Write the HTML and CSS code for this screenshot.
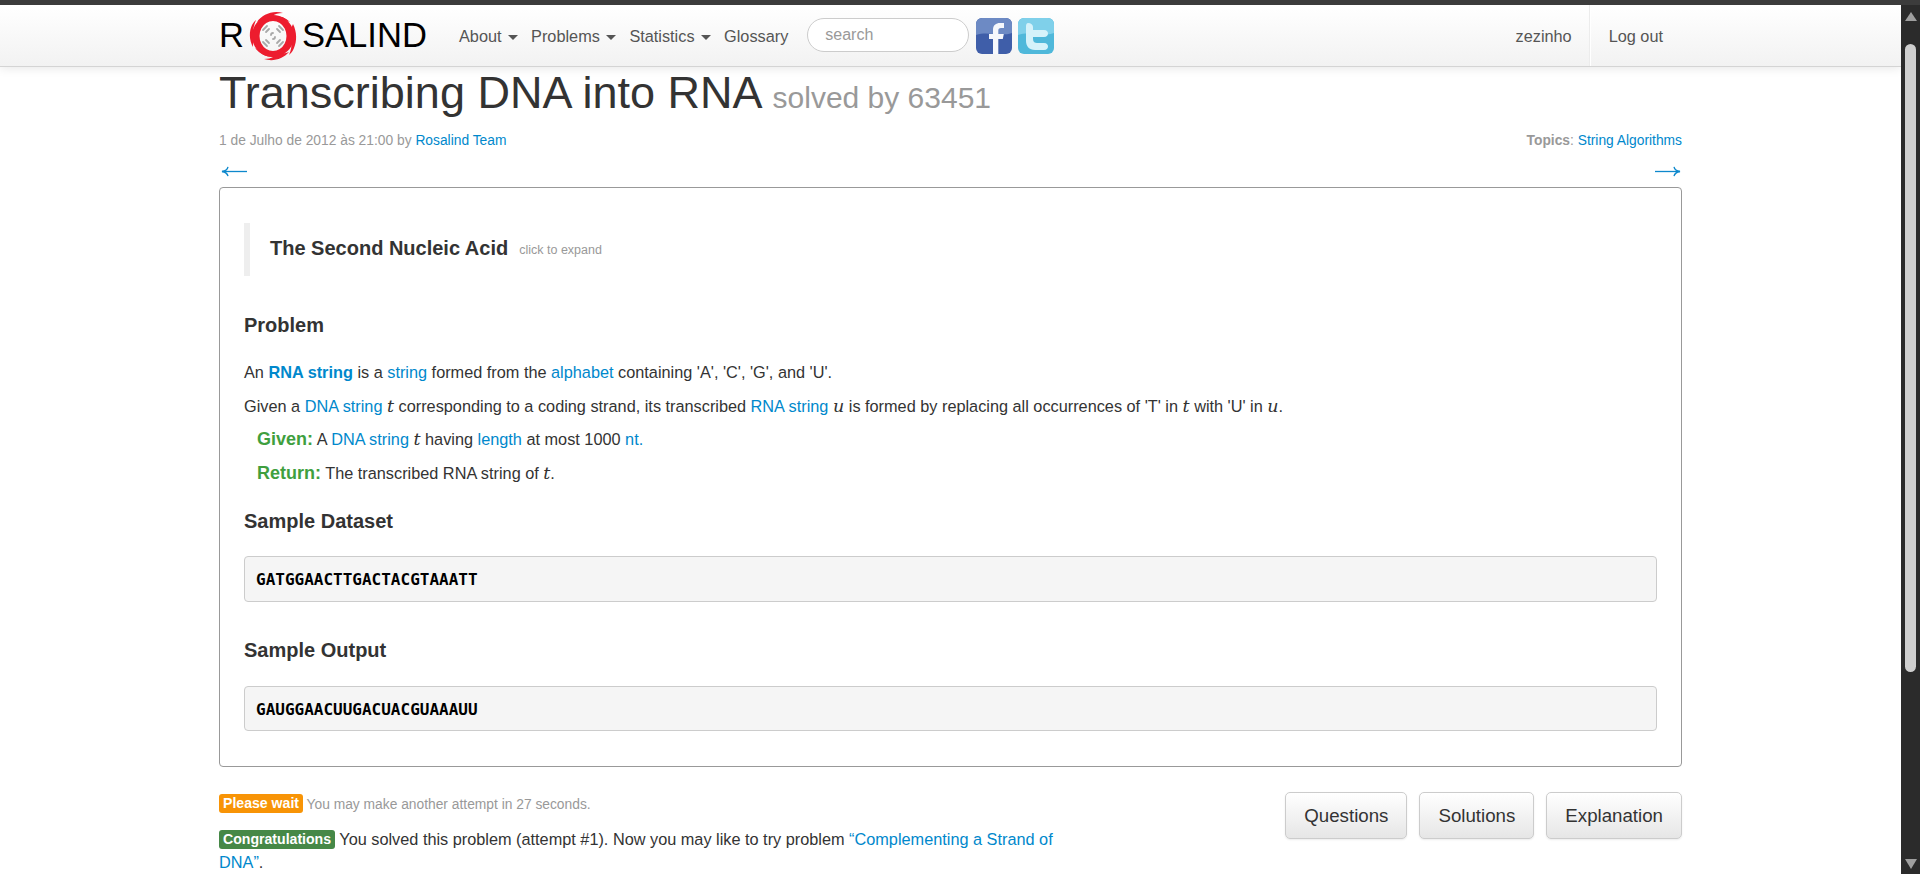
FILE: index.html
```html
<!DOCTYPE html>
<html lang="en">
<head>
<meta charset="utf-8">
<title>Transcribing DNA into RNA</title>
<link rel="stylesheet" href="styles.css">
</head>
<body>
<div class="window-top"></div>
<div class="viewport">
  <div class="page">
    <header class="navbar">
      <div class="container nav-inner">
        <a class="logo"><span>R</span>
          <svg class="logo-mark" viewBox="0 0 50 50" width="50" height="50" aria-hidden="true">
            <path fill="#ed1c2e" fill-rule="evenodd" d="M25 4a21 21 0 1 0 .01 0z M25 10a13.500 15 0 1 1-.01 0z"/>
            <path fill="#ed1c2e" d="M9 11C14 4 24-1 35 2c-5 0-8 1-11 3 6-1 13 1 18 6-7-3-20-6-33 0z"/>
            <path fill="#ed1c2e" d="M45 13c4 8 4 17 1 24-1 3-3 5-5 7 2-5 3-9 2-13-1-7-1-12 2-18z"/>
            <path fill="#ed1c2e" d="M41 41c-6 7-16 10-25 7 4 0 7-1 9-2-7 0-13-3-18-9 7 4 21 9 34 4z"/>
            <path fill="#ed1c2e" d="M5 36C1 29 1 20 4 14c1-2 2-3 4-5-2 5-3 9-3 13 0 5 0 9 0 14z"/>
            <g fill="none" stroke="#a8a8a8" stroke-width="1.800" stroke-linecap="round">
              <path d="M15 19l4-4"/><path d="M18 21l3-3"/>
              <path d="M31 15l4 4"/><path d="M29 18l3 3"/>
              <path d="M35 31l-4 4"/><path d="M32 29l-3 3"/>
              <path d="M19 35l-4-4"/><path d="M21 32l-3-3"/>
              <path d="M23 24c0-1 1-2 2-2"/><path d="M27 26c0 1-1 2-2 2"/>
            </g>
          </svg>
          <span>SALIND</span></a>
        <nav class="nav-main">
          <a class="nav-item">About <i class="caret"></i></a>
          <a class="nav-item">Problems <i class="caret"></i></a>
          <a class="nav-item">Statistics <i class="caret"></i></a>
          <a class="nav-item">Glossary</a>
        </nav>
        <input class="search" type="text" placeholder="search">
        <div class="social">
          <svg width="36" height="36" viewBox="0 0 36 36" aria-hidden="true">
            <rect width="36" height="36" rx="6" fill="#3f5ea9"/>
            <path d="M0 6a6 6 0 0 1 6-6h24a6 6 0 0 1 6 6v9c-12 4-24-2-36 2z" fill="#6d8ac4"/>
            <path d="M17 36V21h-4v-5h4v-4c0-5 3-7 7-7h4v5h-3c-2 0-2.700 1-2.700 2.500V16h5.500l-1 5h-4.500v15z" fill="#f6f8fc"/>
          </svg>
          <svg width="36" height="36" viewBox="0 0 36 36" aria-hidden="true">
            <rect width="36" height="36" rx="6" fill="#4fb8da"/>
            <path d="M0 6a6 6 0 0 1 6-6h24a6 6 0 0 1 6 6v9c-12 4-24-2-36 2z" fill="#7fd0ea"/>
            <path d="M10 5c3 0 5 2 5 4v3h11c3 0 4 2 4 3.500S29 19 26 19H15v2c0 3 2 4 4 4h7c3 0 4 2 4 3.500S29 32 26 32h-9C11 32 8 28 8 23V8c0-2 1-3 2-3z" fill="#d5f2fa"/>
          </svg>
        </div>
        <div class="nav-user">
          <a class="nav-item user">zezinho</a>
          <a class="nav-item logout">Log out</a>
        </div>
      </div>
    </header>

    <main class="container content">
      <h1 class="title">Transcribing DNA into RNA <small>solved by 63451</small></h1>
      <div class="meta">
        <span>1 de Julho de 2012 às 21:00 by <a>Rosalind Team</a></span>
        <span><b>Topics</b>: <a>String Algorithms</a></span>
      </div>
      <div class="pager">
        <a class="prev" aria-label="Previous">
          <svg width="26" height="11" viewBox="0 0 26 11" fill="none" stroke="#0d88cc" stroke-width="1.300" aria-hidden="true">
            <path d="M1 5.500H26"/>
            <path d="M7 .8C6.500 3.300 4 5 1 5.500 4 6 6.500 7.700 7 10.200"/>
          </svg>
        </a>
        <a class="next" aria-label="Next">
          <svg width="26" height="11" viewBox="0 0 26 11" fill="none" stroke="#0d88cc" stroke-width="1.300" aria-hidden="true">
            <path d="M0 5.500H25"/>
            <path d="M19 .8C19.500 3.300 22 5 25 5.500 22 6 19.500 7.700 19 10.200"/>
          </svg>
        </a>
      </div>

      <article class="problem">
        <blockquote class="story"><span class="story-title">The Second Nucleic Acid</span><span class="expand">click to expand</span></blockquote>
        <h2 class="h-problem">Problem</h2>
        <p>An <a><b>RNA string</b></a> is a <a>string</a> formed from the <a>alphabet</a> containing 'A', 'C', 'G', and 'U'.</p>
        <p class="tight">Given a <a>DNA string</a> <i class="math">t</i> corresponding to a coding strand, its transcribed <a>RNA string</a> <i class="math">u</i> is formed by replacing all occurrences of 'T' in <i class="math">t</i> with 'U' in <i class="math">u</i>.</p>
        <p class="indent"><b class="green">Given:</b> A <a>DNA string</a> <i class="math">t</i> having <a>length</a> at most 1000 <a>nt.</a></p>
        <p class="indent"><b class="green">Return:</b> The transcribed RNA string of <i class="math">t</i>.</p>
        <h2 class="h-sample">Sample Dataset</h2>
        <pre class="code">GATGGAACTTGACTACGTAAATT</pre>
        <h2 class="h-output">Sample Output</h2>
        <pre class="code code-output">GAUGGAACUUGACUACGUAAAUU</pre>
      </article>

      <section class="bottom">
        <div class="messages">
          <p class="wait"><span class="label orange">Please wait</span> You may make another attempt in 27 seconds.</p>
          <p class="congrats"><span class="label dark-green">Congratulations</span> You solved this problem (attempt #1). Now you may like to try problem <a>“Complementing a Strand of</a> <a>DNA”</a>.</p>
        </div>
        <div class="buttons">
          <a class="btn">Questions</a>
          <a class="btn">Solutions</a>
          <a class="btn">Explanation</a>
        </div>
      </section>
    </main>
  </div>
  <aside class="scrollbar">
    <i class="arrow up"></i>
    <div class="track"><div class="thumb"></div></div>
    <i class="arrow down"></i>
  </aside>
</div>
</body>
</html>
```
FILE: styles.css
```css
* { box-sizing: border-box; }
html, body { margin: 0; height: 100%; overflow: hidden; }
body {
  display: flex;
  flex-direction: column;
  font-family: "Liberation Sans", Arial, sans-serif;
  font-size: 16.300px;
  line-height: 23px;
  color: #333;
  background: #fff;
}
a { color: #0088cc; text-decoration: none; }
p { margin: 0; }

.window-top { height: 5px; background: #3c3c3c; flex: none; }
.viewport { flex: 1; display: flex; min-height: 0; }
.page { flex: 1; min-width: 0; overflow: hidden; }
.container { width: 1463px; margin: 0 auto; }

.navbar {
  height: 62px;
  background: linear-gradient(#ffffff, #f2f2f2);
  border-bottom: 1px solid #d4d4d4;
  box-shadow: 0 1px 10px rgba(0, 0, 0, .1);
}
.nav-inner { display: flex; align-items: flex-start; height: 61px; }
.logo {
  display: flex;
  align-items: center;
  width: 240px;
  height: 61px;
  flex: none;
  color: #000;
  font-size: 34.600px;
}
.logo-mark { margin: 0 4px 0 4px; flex: none; }
.nav-main { display: flex; flex: none; }
.nav-item { color: #555; line-height: 63px; white-space: nowrap; }
.nav-main .nav-item { margin-right: 13px; }
.nav-main .nav-item:last-child { margin-right: 0; }
.caret {
  display: inline-block;
  width: 0; height: 0;
  margin-left: 2px;
  vertical-align: middle;
  border: 5px solid transparent;
  border-top-color: #555;
  border-bottom: 0;
}
.search {
  width: 162px;
  height: 34px;
  margin: 13px 0 0 19px;
  padding: 0 17px;
  border: 1px solid #ccc;
  border-radius: 17px;
  background: #fff;
  font: 16px "Liberation Sans", Arial, sans-serif;
  color: #555;
  flex: none;
}
.search::placeholder { color: #999; opacity: 1; }
.social { display: flex; gap: 6px; margin: 13px 0 0 7px; flex: none; }
.social svg { display: block; }
.nav-user { margin-left: auto; display: flex; height: 61px; flex: none; }
.user { padding: 0 17px; border-right: 1px solid #ececec; }
.logout { padding: 0 19px 0 18px; border-left: 1px solid #fff; }

.title {
  margin: 0;
  height: 50px;
  font-size: 45px;
  font-weight: 400;
  line-height: 52px;
  color: #333;
}
.title small { font-size: 30px; color: #999; }
.meta {
  display: flex;
  justify-content: space-between;
  margin-top: 14px;
  font-size: 13.800px;
  line-height: 20px;
  color: #999;
}
.pager {
  display: flex;
  justify-content: space-between;
  align-items: flex-start;
  height: 36px;
  padding: 15px 1px 0 2px;
}
.pager svg { display: block; }
.problem {
  height: 580px;
  padding: 35px 24px 0;
  border: 1px solid #999;
  border-radius: 4px;
}
.story {
  display: flex;
  align-items: center;
  height: 53px;
  margin: 0;
  padding: 0 0 2px 20px;
  border-left: 6px solid #eee;
}
.story-title { font-size: 20px; font-weight: 700; color: #333; }
.expand { margin-left: 11px; padding-top: 4px; font-size: 12.500px; color: #999; }
h2 { margin: 0; font-size: 20px; line-height: 30px; font-weight: 700; color: #333; }
.h-problem { margin-top: 34px; margin-bottom: 15px; }
.problem p { height: 34px; line-height: 34px; }
.problem p.tight { height: 33px; }
.problem p.indent { padding-left: 13px; }
.green { color: #3f9f3f; font-size: 18px; }
.math { font-family: "DejaVu Serif", "Liberation Serif", serif; font-size: 17.500px; }
.h-sample { margin-top: 16px; margin-bottom: 20px; }
.h-output { margin-top: 33px; margin-bottom: 21px; }
.code {
  margin: 0;
  height: 46px;
  padding: 0 11px;
  background: #f5f5f5;
  border: 1px solid #ccc;
  border-radius: 4px;
  font-family: "DejaVu Sans Mono", "Liberation Mono", monospace;
  font-weight: 700;
  font-size: 16px;
  line-height: 46px;
  color: #000;
}
.code-output { height: 45px; line-height: 45px; }
.bottom { display: flex; justify-content: space-between; margin-top: 25px; }
.messages { width: 846px; }
.wait { margin-top: 2px; font-size: 13.800px; line-height: 20px; color: #999; }
.congrats { margin-top: 13px; line-height: 23px; }
.label {
  display: inline-block;
  padding: 0 4px;
  border-radius: 3px;
  color: #fff;
  font-size: 14.100px;
  font-weight: 700;
  line-height: 19px;
  vertical-align: 1px;
}
.orange { background: #f89406; }
.dark-green { background: #468847; }
.buttons { display: flex; gap: 12px; flex: none; }
.btn {
  display: block;
  height: 47px;
  padding: 0 18px;
  border: 1px solid #ccc;
  border-radius: 5px;
  background: linear-gradient(#fff, #e6e6e6);
  box-shadow: 0 1px 2px rgba(0, 0, 0, .08);
  color: #333;
  font-size: 18.700px;
  line-height: 45px;
}

.scrollbar {
  width: 19px;
  flex: none;
  display: flex;
  flex-direction: column;
  align-items: center;
  background: #2b2b2b;
  padding: 7px 0 5px;
}
.arrow { width: 0; height: 0; border: 6px solid transparent; flex: none; }
.arrow.up { border-top: 0; border-bottom: 9px solid #9f9f9f; }
.arrow.down { border-bottom: 0; border-top: 10px solid #9f9f9f; }
.track { flex: 1; width: 100%; padding: 23px 4px 0; min-height: 0; }
.thumb { width: 11px; height: 628px; background: #cfcfcf; border-radius: 6px; }
```
